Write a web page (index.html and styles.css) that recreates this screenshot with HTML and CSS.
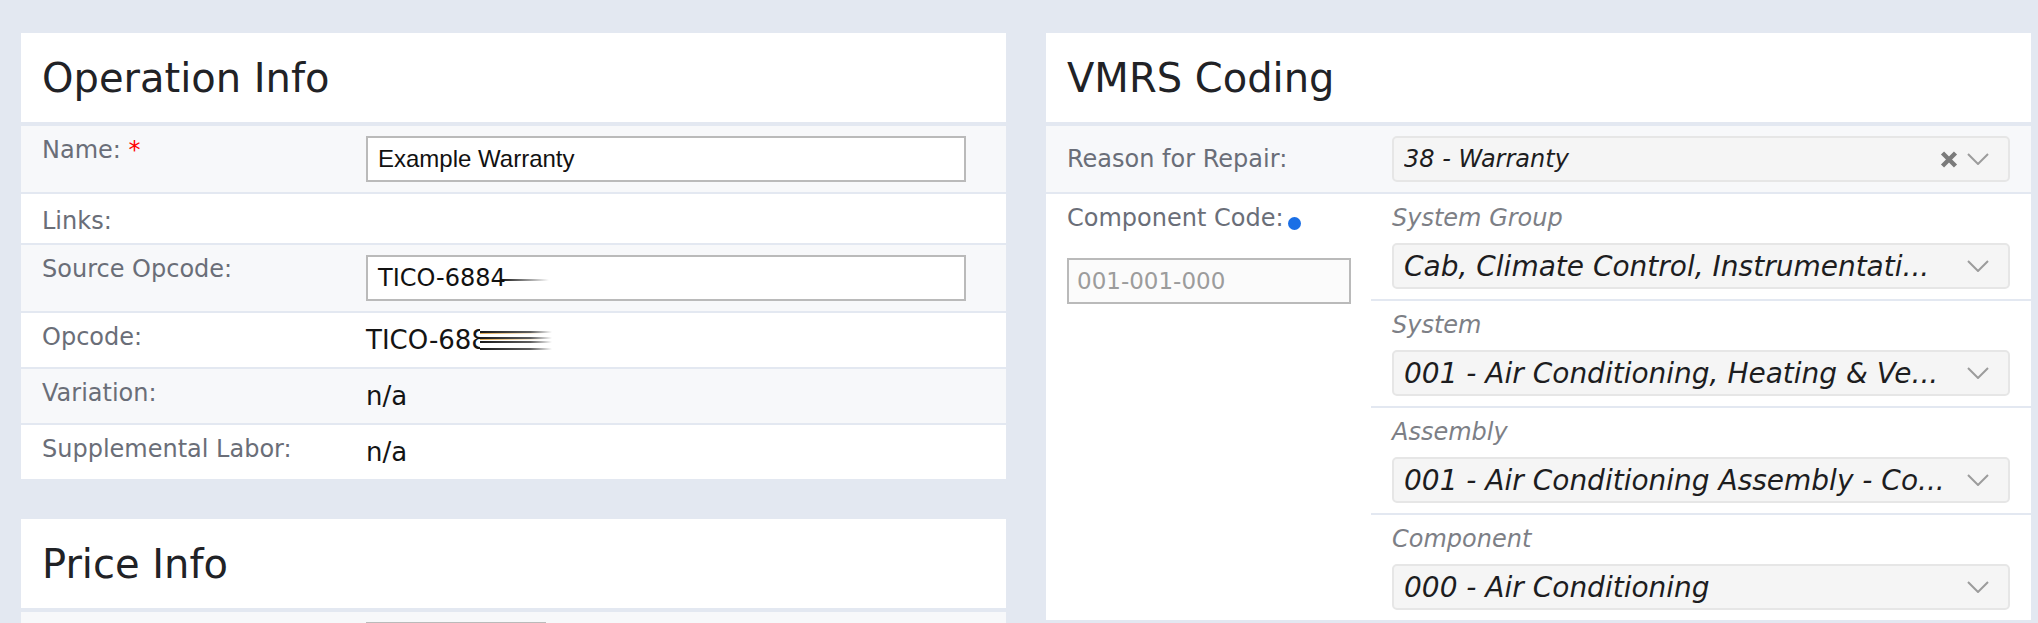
FILE: index.html
```html
<!DOCTYPE html>
<html lang="en">
<head>
    <meta charset="UTF-8">
    <meta name="viewport" content="width=device-width, initial-scale=1.0">
    <title>Edit Operation</title>
    <link rel="stylesheet" href="styles.css">
</head>
<body>
<div class="page">
    <div class="column">
        <section class="card">
            <div class="card-head"><h2>Operation Info</h2></div>

            <div class="row alt">
                <div class="label">Name: <span class="req">*</span></div>
                <div class="value"><div class="textbox arial">Example Warranty</div></div>
            </div>
            <div class="row">
                <div class="label low">Links:</div>
                <div class="value"></div>
            </div>
            <div class="row alt">
                <div class="label">Source Opcode:</div>
                <div class="value">
                    <div class="textbox">TICO-6884<svg class="smear-line" width="48" height="2" viewBox="0 0 48 2">
                        <defs>
                            <linearGradient id="fadeA" x1="0" x2="1" y1="0" y2="0">
                                <stop offset="0" stop-color="#111"/>
                                <stop offset="1" stop-color="#111" stop-opacity="0"/>
                            </linearGradient>
                        </defs>
                        <rect x="0" y="0" width="48" height="2" fill="url(#fadeA)"/>
                    </svg></div>
                </div>
            </div>
            <div class="row">
                <div class="label">Opcode:</div>
                <div class="value text">TICO-688<svg class="smear" width="72" height="24" viewBox="0 0 72 24">
                    <defs>
                        <linearGradient id="fadeB" x1="0" x2="1" y1="0" y2="0">
                            <stop offset="0" stop-color="#1a1a1a"/>
                            <stop offset="0.7" stop-color="#1a1a1a" stop-opacity="0.7"/>
                            <stop offset="1" stop-color="#1a1a1a" stop-opacity="0"/>
                        </linearGradient>
                        <linearGradient id="fadeC" x1="0" x2="1" y1="0" y2="0">
                            <stop offset="0" stop-color="#e0a850"/>
                            <stop offset="1" stop-color="#e0a850" stop-opacity="0"/>
                        </linearGradient>
                    </defs>
                    <rect x="0" y="0" width="10" height="24" fill="#fff"/>
                    <rect x="0" y="3" width="72" height="2" fill="url(#fadeB)"/>
                    <rect x="0" y="5" width="64" height="1" fill="url(#fadeC)"/>
                    <rect x="0" y="9" width="72" height="2" fill="url(#fadeB)"/>
                    <rect x="0" y="11" width="64" height="1" fill="url(#fadeC)"/>
                    <rect x="0" y="13" width="72" height="2" fill="url(#fadeB)"/>
                    <rect x="0" y="20" width="72" height="2" fill="url(#fadeB)"/>
                </svg></div>
            </div>
            <div class="row alt">
                <div class="label">Variation:</div>
                <div class="value text">n/a</div>
            </div>
            <div class="row last">
                <div class="label">Supplemental Labor:</div>
                <div class="value text">n/a</div>
            </div>
        </section>

        <section class="card">
            <div class="card-head"><h2>Price Info</h2></div>
            <div class="row alt">
                <div class="label"></div>
                <div class="value"><div class="textbox small"></div></div>
            </div>
        </section>
    </div>

    <section class="card">
        <div class="card-head"><h2>VMRS Coding</h2></div>

        <div class="row alt">
            <div class="label middle">Reason for Repair:</div>
            <div class="value wide">
                <div class="select small-text">
                    <span class="select-text">38 - Warranty</span>
                    <svg class="clear" width="18" height="17" viewBox="0 0 18 17">
                        <path d="M2.5 2 L15.5 15 M15.5 2 L2.5 15" stroke="#7b7b7b" stroke-width="4.4"/>
                    </svg>
                    <svg class="chevron" width="22" height="12" viewBox="0 0 22 12">
                        <polyline points="1,1 11,11 21,1" fill="none" stroke="#9c9c9c" stroke-width="2"/>
                    </svg>
                </div>
            </div>
        </div>

        <div class="row last">
            <div class="code-cell">
                <div class="label-line">Component Code:<span class="dot"></span></div>
                <div class="textbox code">001-001-000</div>
            </div>
            <div class="levels">
                <div class="level">
                    <div class="level-label">System Group</div>
                    <div class="select">
                        <span class="select-text">Cab, Climate Control, Instrumentati...</span>
                        <svg class="chevron" width="22" height="12" viewBox="0 0 22 12">
                            <polyline points="1,1 11,11 21,1" fill="none" stroke="#9c9c9c" stroke-width="2"/>
                        </svg>
                    </div>
                </div>
                <div class="level">
                    <div class="level-label">System</div>
                    <div class="select">
                        <span class="select-text">001 - Air Conditioning, Heating &amp; Ve...</span>
                        <svg class="chevron" width="22" height="12" viewBox="0 0 22 12">
                            <polyline points="1,1 11,11 21,1" fill="none" stroke="#9c9c9c" stroke-width="2"/>
                        </svg>
                    </div>
                </div>
                <div class="level">
                    <div class="level-label">Assembly</div>
                    <div class="select">
                        <span class="select-text">001 - Air Conditioning Assembly - Co...</span>
                        <svg class="chevron" width="22" height="12" viewBox="0 0 22 12">
                            <polyline points="1,1 11,11 21,1" fill="none" stroke="#9c9c9c" stroke-width="2"/>
                        </svg>
                    </div>
                </div>
                <div class="level">
                    <div class="level-label">Component</div>
                    <div class="select">
                        <span class="select-text">000 - Air Conditioning</span>
                        <svg class="chevron" width="22" height="12" viewBox="0 0 22 12">
                            <polyline points="1,1 11,11 21,1" fill="none" stroke="#9c9c9c" stroke-width="2"/>
                        </svg>
                    </div>
                </div>
            </div>
        </div>
    </section>
</div>
</body>
</html>
```

FILE: styles.css
```css
html, body { margin: 0; overflow: hidden; }
body { background: #e3e8f1; font-family: "DejaVu Sans", sans-serif; color: #1c1c1c; }

.page { display: grid; grid-template-columns: 985px 985px; column-gap: 40px; align-items: start; padding: 33px 7px 0 21px; }
.column { display: flex; flex-direction: column; gap: 40px; }

.card { background: #fff; }
.card-head { height: 89px; display: flex; align-items: center; padding-left: 21px; border-bottom: 4px solid #e3e8f1; }
.card-head h2 { margin: 0; font-size: 40px; font-weight: normal; line-height: 1; color: #212226; }

.row { display: grid; grid-template-columns: 325px 1fr; border-bottom: 2px solid #e3e8f1; }
.row.alt { background: #f7f8fa; }
.row.last { border-bottom: 0; }

.label { padding: 10px 0 10px 21px; font-size: 24px; line-height: 29px; color: #6a6e78; }
.label.low { padding: 13px 0 7px 21px; }
.label.middle { align-self: center; padding-top: 0; padding-bottom: 0; }
.req { color: #f00; }
.value { padding: 10px 40px 10px 20px; }
.value.wide { padding: 10px 21px; }
.value.text { font-size: 26px; line-height: 34px; color: #141414; white-space: nowrap; }

.textbox { box-sizing: border-box; width: 600px; height: 46px; border: 2px solid #bababa; background: #fff; padding: 0 10px; display: flex; align-items: center; font-size: 24px; color: #111; white-space: nowrap; }
.textbox.arial { font-family: "Liberation Sans", Arial, sans-serif; }
.textbox.small { width: 180px; }
.textbox.code { width: 100%; margin-top: 25px; padding: 0 8px; background: #fbfbfb; color: #9c9c9c; font-size: 23px; }

/* redacted tails of the opcode */
.smear-line { margin-left: -5px; margin-top: 3px; }
.smear { vertical-align: -3px; margin-left: -8px; }

.code-cell { padding: 10px 20px 10px 21px; }
.label-line { font-size: 24px; line-height: 29px; color: #6a6e78; white-space: nowrap; }
.dot { display: inline-block; width: 13px; height: 13px; border-radius: 50%; background: #1a6fe6; margin-left: 4px; vertical-align: -4px; }

.levels { display: flex; flex-direction: column; }
.level { padding: 10px 21px; border-bottom: 2px solid #e3e8f1; }
.level:last-child { border-bottom: 0; }
.level-label { font-size: 24px; line-height: 29px; font-style: italic; color: #7d7f86; margin-bottom: 10px; }

.select { box-sizing: border-box; height: 46px; display: flex; align-items: center; background: #f5f5f5; border: 2px solid #e6e6e6; border-radius: 5px; padding: 0 19px 0 10px; font-size: 28px; font-style: italic; color: #1d1d1f; }
.select.small-text { font-size: 24px; }
.select-text { flex: 1; white-space: nowrap; overflow: hidden; }
.clear { margin-right: 9px; }
```
